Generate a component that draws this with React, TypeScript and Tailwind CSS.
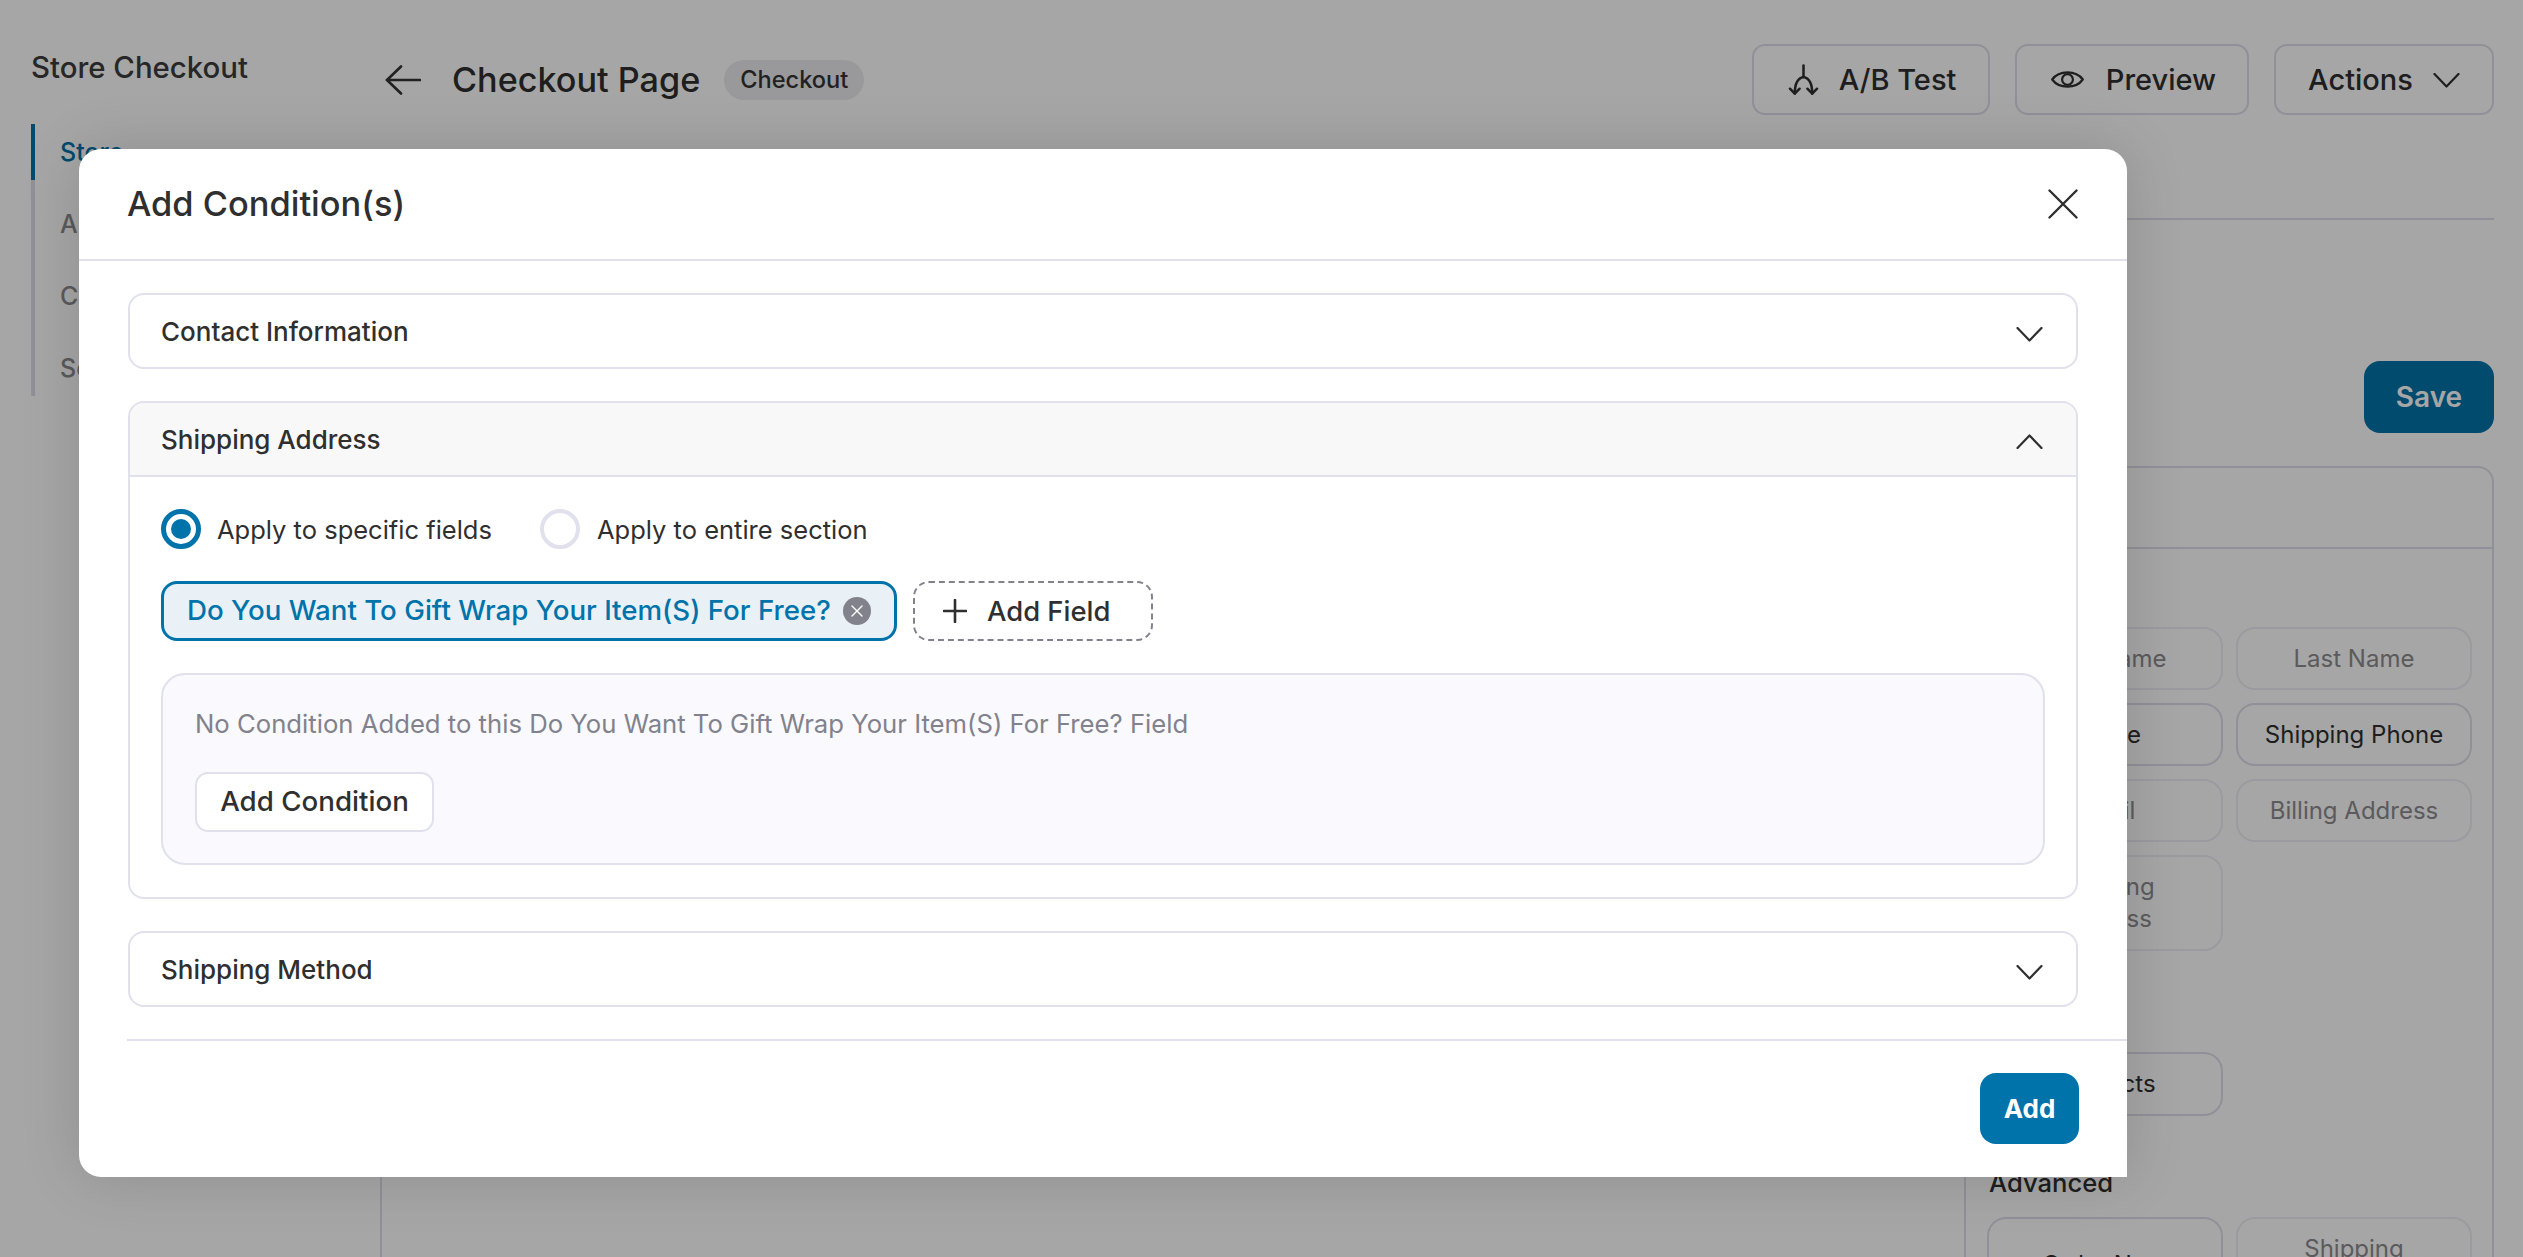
const fieldRows = [
  { left: "First Name", right: "Last Name", leftOn: false, rightOn: false },
  { left: "Phone", right: "Shipping Phone", leftOn: true, rightOn: true },
  { left: "Email", right: "Billing Address", leftOn: false, rightOn: false },
];

const sideLinks = ["Store", "Appearance", "Cart", "Settings"];

function FieldChip({ label, on, className = "" }: { label: string; on: boolean; className?: string }) {
  return (
    <div
      className={`flex w-[236px] items-center justify-center rounded-[19px] border-2 text-center text-[24px] leading-[32px] ${
        on ? "border-[#dedeea] text-[#2f2f2f]" : "border-[#eeeef4] text-[#8c8c90]"
      } ${className}`}
    >
      {label}
    </div>
  );
}

function SplitIcon() {
  return (
    <svg viewBox="0 0 32 34" className="h-[34px] w-[31px]" fill="none" stroke="currentColor" strokeWidth="2.6" strokeLinecap="round" strokeLinejoin="round">
      <path d="M16 2v12" />
      <path d="M16 14c-5 1-9 6-9 17" />
      <path d="M16 14c5 1 9 6 9 17" />
      <path d="M2 26l5 5 5-5" />
      <path d="M20 26l5 5 5-5" />
    </svg>
  );
}

function BackArrow() {
  return (
    <svg viewBox="0 0 36 30" className="h-[30px] w-[36px]" fill="none" stroke="currentColor" strokeWidth="2.6" strokeLinecap="round" strokeLinejoin="round">
      <path d="M35 15H2" />
      <path d="M16 1.5L2 15l14 13.5" />
    </svg>
  );
}

function EyeIcon() {
  return (
    <svg viewBox="0 0 33 21" className="h-[21px] w-[33px]" fill="none" stroke="currentColor" strokeWidth="2.2" strokeLinejoin="round">
      <path d="M1.2 10.5C8 1 25 1 31.8 10.5 25 20 8 20 1.2 10.5Z" />
      <circle cx="16.5" cy="10.5" r="5.4" />
    </svg>
  );
}

function Chevron({ up = false, className = "" }: { up?: boolean; className?: string }) {
  return (
    <svg viewBox="0 0 27 15" className={`h-[15px] w-[27px] ${className}`} fill="none" stroke="currentColor" strokeWidth="2.2" strokeLinecap="round" strokeLinejoin="round">
      <path d={up ? "M1.5 14L13.5 1.5 25.5 14" : "M1.5 1L13.5 13.5 25.5 1"} />
    </svg>
  );
}

function CloseIcon() {
  return (
    <svg viewBox="0 0 30 30" className="h-[30px] w-[30px]" fill="none" stroke="currentColor" strokeWidth="2.4" strokeLinecap="round">
      <path d="M1.5 1.5l27 27M28.5 1.5l-27 27" />
    </svg>
  );
}

function PlusIcon() {
  return (
    <svg viewBox="0 0 24 24" className="h-[24px] w-[24px]" fill="none" stroke="currentColor" strokeWidth="2.6" strokeLinecap="round">
      <path d="M12 1v22M1 12h22" />
    </svg>
  );
}

function SmallX() {
  return (
    <svg viewBox="0 0 12 12" className="h-[12px] w-[12px]" fill="none" stroke="currentColor" strokeWidth="1.4" strokeLinecap="round">
      <path d="M1 1l10 10M11 1L1 11" />
    </svg>
  );
}

function Section({ title }: { title: string }) {
  return (
    <div className="flex h-[76px] items-center justify-between rounded-[16px] border-2 border-[#e1e1ed] pl-[31px] pr-[33px]">
      <span className="text-[26px] font-medium text-[#2f2f2f]">{title}</span>
      <Chevron className="mt-[6px] text-[#2f2f2f]" />
    </div>
  );
}

export default function App() {
  return (
    <div className="relative flex h-screen w-full overflow-hidden bg-white font-['Inter',sans-serif]">
      {/* page behind the dialog */}
      <aside className="w-[380px] shrink-0 pl-[31px] pt-[50px]">
        <h2 className="text-[29.4px] font-medium leading-[36px] text-[#3c3c3c]">Store Checkout</h2>
        <ul className="mt-[38px] flex w-[200px] flex-col gap-[16px] border-l-4 border-[#dedee6] text-[25px] font-medium">
          {sideLinks.map((link, i) => (
            <li
              key={link}
              className={`-ml-1 flex h-[56px] items-center border-l-4 pl-[25px] pt-[2px] ${
                i === 0 ? "border-[#0073aa] text-[#0073aa]" : "border-transparent text-[#8a8a8e]"
              }`}
            >
              {link}
            </li>
          ))}
        </ul>
      </aside>

      <main className="flex min-w-0 flex-1 flex-col pr-[29px] pt-[44px]">
        <header className="flex h-[71px] items-center">
          <span className="ml-[5px] text-[#333]">
            <BackArrow />
          </span>
          <h1 className="ml-[31px] text-[34.2px] font-medium text-[#2f2f2f]">Checkout Page</h1>
          <span className="ml-[24px] flex h-[40px] items-center rounded-full bg-[#ebebee] px-[16px] text-[23.6px] font-medium text-[#333]">Checkout</span>
          <div className="ml-auto flex gap-[25px] text-[29px] font-medium text-[#2f2f2f]">
            <button className="flex h-[71px] w-[238px] items-center justify-center gap-[20px] rounded-[13px] border-2 border-[#dedeea] pl-[2px]">
              <SplitIcon />
              A/B Test
            </button>
            <button className="flex h-[71px] w-[234px] items-center justify-center gap-[22px] rounded-[13px] border-2 border-[#dedeea] pl-[3px]">
              <EyeIcon />
              Preview
            </button>
            <button className="flex h-[71px] w-[220px] items-center justify-center gap-[20px] rounded-[13px] border-2 border-[#dedeea]">
              Actions
              <Chevron className="mt-[2px]" />
            </button>
          </div>
        </header>

        <div className="mt-[103px] border-b-2 border-[#dedeea]" />

        <div className="mt-[141px] flex justify-end">
          <button className="h-[72px] w-[130px] rounded-[16px] bg-[#0073aa] text-[28px] font-semibold text-white">Save</button>
        </div>

        <div className="mt-[33px] flex min-h-0 flex-1 justify-between">
          <div className="w-[1500px] border-l-2 border-[#dedeea]" />
          <div className="w-[530px] rounded-t-[16px] border-2 border-b-0 border-[#dedeea]">
            <div className="h-[81px] border-b-2 border-[#dedeea]" />
            <div className="pl-[21px]">
              <div className="mt-[78px] grid grid-cols-[236px_236px] gap-x-[13px] gap-y-[13px]">
                {fieldRows.map((row) => (
                  <div key={row.right} className="contents">
                    <FieldChip label={row.left} on={row.leftOn} className="h-[63px]" />
                    <FieldChip label={row.right} on={row.rightOn} className="h-[63px]" />
                  </div>
                ))}
                <FieldChip label="Shipping Address" on={false} className="h-[96px] px-[40px]" />
              </div>
              <FieldChip label="Products" on className="mt-[101px] h-[64px]" />
              <h3 className="mt-[51px] pl-[2px] text-[25.6px] font-medium leading-[32px] text-[#2f2f2f]">Advanced</h3>
              <div className="mt-[18px] grid grid-cols-[236px_236px] gap-x-[13px]">
                <FieldChip label="Order Note" on className="h-[96px]" />
                <FieldChip label="Shipping Method" on={false} className="h-[96px] px-[40px]" />
              </div>
            </div>
          </div>
        </div>
      </main>

      {/* dim layer + dialog */}
      <div className="absolute inset-0 bg-black/35 pl-[79px] pt-[149px]">
        <div className="flex h-[1028px] w-[2048px] flex-col rounded-[22px] rounded-br-none bg-white shadow-[0_0_60px_rgba(0,0,0,0.14)]">
          <div className="flex h-[112px] shrink-0 items-center justify-between border-b-2 border-[#e1e1ed] pl-[48px] pr-[49px]">
            <h2 className="text-[34.4px] font-medium text-[#2f2f2f]">Add Condition(s)</h2>
            <span className="text-[#2f2f2f]">
              <CloseIcon />
            </span>
          </div>

          <div className="flex flex-col gap-[32px] pl-[49px] pr-[49px] pt-[32px]">
            <Section title="Contact Information" />

            <div className="overflow-hidden rounded-[16px] border-2 border-[#e1e1ed]">
              <div className="flex h-[74px] items-center justify-between border-b-2 border-[#e1e1ed] bg-[#f8f8f8] pl-[31px] pr-[33px]">
                <span className="text-[26px] font-medium text-[#2f2f2f]">Shipping Address</span>
                <Chevron up className="mt-[4px] text-[#2f2f2f]" />
              </div>
              <div className="px-[31px] pb-[32px] pt-[32px]">
                <div className="flex items-center text-[25.5px] text-[#2f2f2f]">
                  <span className="flex h-[40px] w-[40px] items-center justify-center rounded-full border-[5px] border-[#0073aa]">
                    <span className="h-[20px] w-[20px] rounded-full bg-[#0073aa]" />
                  </span>
                  <span className="ml-[16px] pt-[2px]">Apply to specific fields</span>
                  <span className="ml-[48px] h-[40px] w-[40px] rounded-full border-[4px] border-[#e1e1ed]" />
                  <span className="ml-[17px] pt-[2px]">Apply to entire section</span>
                </div>

                <div className="mt-[32px] flex gap-[16px]">
                  <div className="flex h-[60px] w-[736px] items-center justify-between rounded-[16px] border-[3px] border-[#0073aa] bg-[#e9f1f6] pl-[23px] pr-[23px] text-[27.7px] font-medium text-[#0073aa]">
                    Do You Want To Gift Wrap Your Item(S) For Free?
                    <span className="flex h-[28px] w-[28px] items-center justify-center rounded-full bg-[#82828c] text-white">
                      <SmallX />
                    </span>
                  </div>
                  <div className="flex h-[60px] w-[240px] items-center gap-[20px] rounded-[16px] border-2 border-dashed border-[#82828c] pl-[28px] text-[27.4px] font-medium text-[#2f2f2f]">
                    <PlusIcon />
                    Add Field
                  </div>
                </div>

                <div className="mt-[32px] h-[192px] rounded-[24px] border-2 border-[#e1e1ed] bg-[#f9f9fe] pl-[32px] pt-[31px]">
                  <p className="text-[25.7px] leading-[36px] text-[#82828c]">
                    No Condition Added to this Do You Want To Gift Wrap Your Item(S) For Free? Field
                  </p>
                  <button className="mt-[30px] h-[60px] w-[239px] rounded-[13px] border-2 border-[#e1e1ed] bg-white text-[27.7px] font-medium text-[#2f2f2f]">
                    Add Condition
                  </button>
                </div>
              </div>
            </div>

            <Section title="Shipping Method" />
          </div>

          <div className="ml-[48px] mt-[32px] flex flex-1 justify-end border-t-2 border-[#e1e1ed] pr-[48px] pt-[32px]">
            <button className="h-[71px] w-[99px] rounded-[16px] bg-[#0073aa] text-[26px] font-bold text-white">Add</button>
          </div>
        </div>
      </div>
    </div>
  );
}
